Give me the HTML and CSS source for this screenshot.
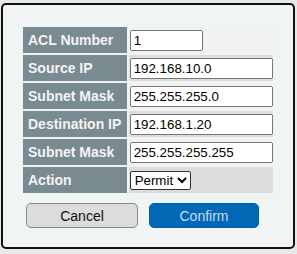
FILE: index.html
```html
<!DOCTYPE html>
<html lang="en">
<head>
  <meta charset="UTF-8" />
  <title>ACL Rule</title>
  <link rel="stylesheet" href="styles.css">
</head>
<body>
  <!-- ACL dialog -->
  <div class="dialog">
    <table class="acl-table">
      <tr>
        <td class="label">ACL Number</td>
        <td class="value"><input type="text" class="short" value="1"></td>
      </tr>
      <tr>
        <td class="label">Source IP</td>
        <td class="value"><input type="text" value="192.168.10.0"></td>
      </tr>
      <tr>
        <td class="label">Subnet Mask</td>
        <td class="value"><input type="text" value="255.255.255.0"></td>
      </tr>
      <tr>
        <td class="label">Destination IP</td>
        <td class="value"><input type="text" value="192.168.1.20"></td>
      </tr>
      <tr>
        <td class="label">Subnet Mask</td>
        <td class="value"><input type="text" value="255.255.255.255"></td>
      </tr>
      <tr>
        <td class="label">Action</td>
        <td class="value">
          <select>
            <option>Permit</option>
            <option>Deny</option>
          </select>
        </td>
      </tr>
    </table>
    <div class="buttons">
      <button type="button" class="btn cancel">Cancel</button>
      <button type="button" class="btn confirm">Confirm</button>
    </div>
  </div>
</body>
</html>
```

FILE: styles.css
```css
body {
  margin: 0;
  padding: 3px 0 0 1px;
  background: #e8e8e8;
  font-family: "Liberation Sans", Arial, sans-serif;
}

.dialog {
  width: 294px;
  height: 246px;
  box-sizing: border-box;
  border: 2px solid #111;
  border-radius: 5px;
  background: #f0f4f4;
  padding: 20px 18px 0 18px;
}

.acl-table {
  width: 254px;
  border-spacing: 2px;
}

.acl-table td {
  height: 26px;
  padding: 0;
}

.label {
  background: #7a8a91;
  color: #f4f4f4;
  font-weight: bold;
  font-size: 14px;
  padding: 0 5px !important;
  white-space: nowrap;
}

.value {
  background: #f2f2f2;
  padding-left: 1px !important;
}

.acl-table tr:nth-child(even) .value {
  background: #dcdcdc;
}

.value input {
  box-sizing: border-box;
  width: 143px;
  height: 21px;
  font-family: "Liberation Sans", Arial, sans-serif;
  font-size: 13.33px;
  color: #000;
  display: block;
}

.value input.short {
  width: 73px;
}

.value select {
  font-family: "Liberation Sans", Arial, sans-serif;
  font-size: 13.33px;
  height: 19px;
  color: #000;
  background: #fff;
  border: 1px solid #333;
  border-radius: 2px;
  display: block;
}

.buttons {
  display: flex;
  gap: 11px;
  padding-left: 5px;
  margin-top: 8px;
}

.btn {
  height: 25px;
  font-family: "Liberation Sans", Arial, sans-serif;
  font-size: 14px;
  border-radius: 5px;
  cursor: pointer;
}

.cancel {
  width: 112px;
  background: #dcdcdc;
  border: 1px solid #888;
  color: #111;
}

.confirm {
  width: 110px;
  background: #0068b5;
  border: 1px solid #0060a8;
  color: #c8dcee;
}
```
